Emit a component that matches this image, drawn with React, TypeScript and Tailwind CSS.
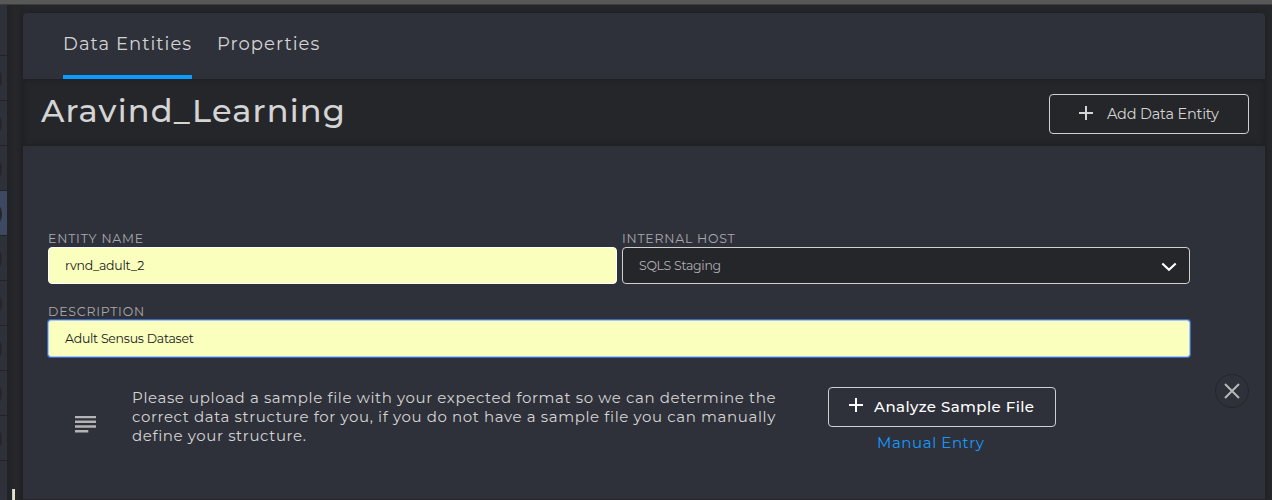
import React from "react";

const rows = ["a", "b", "c", "d", "e", "f", "g", "h", "i"];

function Sidebar() {
  return (
    <aside className="flex h-full w-[7px] shrink-0 flex-col overflow-hidden bg-[#2f313a]">
      <div className="h-[51px] shrink-0 border-b border-[#222327]" />
      {rows.map((row) => (
        <div
          key={row}
          className={
            row === "d"
              ? "flex h-[45px] shrink-0 items-center border-b border-[#222327] bg-[#3d4961] pt-0.5"
              : "flex h-[45px] shrink-0 items-center border-b border-[#222327] pt-0.5"
          }
        >
          <span className="-ml-[30px] h-8 w-8 shrink-0 rounded-full bg-[#25262a]" />
        </div>
      ))}
    </aside>
  );
}

function Plus({ className }: { className: string }) {
  return (
    <svg className={className} viewBox="0 0 14 14" fill="none" stroke="currentColor" strokeWidth="2">
      <path d="M7 0v14M0 7h14" />
    </svg>
  );
}

export default function App() {
  return (
    <div className="flex h-[500px] w-[1272px] flex-col overflow-hidden bg-[#25262a] font-[Montserrat,Inter,sans-serif] text-[#d4d4d4]">
      <div className="h-[5px] shrink-0 border-b border-[#3d3d3e] bg-[#585858]" />
      <div className="flex min-h-0 flex-1">
        <Sidebar />
        <div className="flex w-4 shrink-0 items-end bg-gradient-to-r from-[#212226] via-[#26272b] to-[#232428] pl-[5px]">
          <span className="h-[11px] w-[3px] border-l border-[#a9d0e8] bg-[#f3dfb4]" />
        </div>
        <main className="mt-2 flex w-[1242px] flex-col rounded-t-[4px] bg-[#2f313a] shadow-[0_0_5px_rgba(0,0,0,0.25)]">
          <nav className="flex h-[66px] shrink-0 gap-[25px] pl-10 text-[18px] leading-[22px]">
            <a className="w-[129px] whitespace-nowrap border-b-4 border-[#0a9cff] pt-5 tracking-[1.03px]">Data Entities</a>
            <a className="whitespace-nowrap pt-5 tracking-[1.01px]">Properties</a>
          </nav>
          <header className="flex h-[67px] shrink-0 items-start justify-between bg-[#25262a] pl-[18px] pr-4 shadow-[inset_0_0_6px_rgba(0,0,0,0.25)]">
            <h1 className="mt-3 whitespace-nowrap text-[32px] font-medium leading-[40px] tracking-[1.2px] text-[#d4d4d4]">Aravind_Learning</h1>
            <button className="mt-[15px] flex h-10 w-[200px] items-center rounded-[4px] border border-[#d0d0d0] pl-[29px]">
              <Plus className="-mt-0.5 h-[14px] w-[14px]" />
              <span className="ml-[14px] mt-px whitespace-nowrap text-[14.5px] tracking-[-0.2px]">Add Data Entity</span>
            </button>
          </header>
          <section className="flex min-h-0 flex-1 border-b border-[#25262a] pl-[25px] pt-[85px]">
            <div className="w-[1142px] shrink-0">
              <div className="grid grid-cols-[569px_568px] gap-x-[5px]">
                <label className="flex flex-col">
                  <span className="h-4 whitespace-nowrap text-[12.5px] leading-[16px] tracking-[0.8px] text-[#a8a9ac]">ENTITY NAME</span>
                  <span className="flex h-[37px] items-center rounded-[4px] border border-white bg-[#faffbd] pl-4 text-[12.5px] text-[#202020]">
                    <span className="mt-0.5 whitespace-nowrap tracking-[-0.22px]">rvnd_adult_2</span>
                  </span>
                </label>
                <label className="flex flex-col">
                  <span className="h-4 whitespace-nowrap text-[12.5px] leading-[16px] tracking-[0.75px] text-[#a8a9ac]">INTERNAL HOST</span>
                  <span className="flex h-[37px] items-center justify-between rounded-[4px] border border-[#d0d0d0] bg-[#25262a] pl-4 pr-3 text-[12.5px] text-[#b0b0b2]">
                    <span className="mt-0.5 whitespace-nowrap tracking-[-0.28px]">SQLS Staging</span>
                    <svg className="mt-0.5 h-2.5 w-4" viewBox="0 0 16 10" fill="none" stroke="#fff" strokeWidth="2.2">
                      <path d="M1.3 1.5 8 7.7l6.7-6.2" />
                    </svg>
                  </span>
                </label>
              </div>
              <label className="mt-5 flex flex-col">
                <span className="h-4 whitespace-nowrap text-[12.5px] leading-[16px] tracking-[0.8px] text-[#a8a9ac]">DESCRIPTION</span>
                <span className="flex h-[37px] items-center rounded-[3px] border border-[#a5c7fd] bg-[#faffbd] pl-4 text-[12.5px] text-[#202020] shadow-[0_0_0_1px_#416bb4]">
                  <span className="mt-0.5 whitespace-nowrap tracking-[-0.25px]">Adult Sensus Dataset</span>
                </span>
              </label>
              <div className="flex">
                <svg className="ml-[27px] mt-[59px] h-[17px] w-[21px] shrink-0" viewBox="0 0 21 17" fill="#b4b4b6">
                  <path d="M0 0h21v2.2H0zM0 4.5h21v2.4H0zM0 9.3h21v2.4H0zM0 14.1h13.3v2.4H0z" />
                </svg>
                <p className="ml-9 mt-[31px] w-[660px] shrink-0 whitespace-nowrap text-[15px] leading-[19px] tracking-[0.61px]">
                  <span className="block">Please upload a sample file with your expected format so we can determine the</span>
                  <span className="block">correct data structure for you, if you do not have a sample file you can manually</span>
                  <span className="block">define your structure.</span>
                </p>
                <div className="ml-9 mt-[30px] w-[228px] shrink-0">
                  <button className="flex h-10 w-[228px] items-center rounded-[4px] border border-[#d0d0d0] pl-5 font-medium text-white">
                    <Plus className="-mt-1 h-[14px] w-[14px]" />
                    <span className="ml-[11px] whitespace-nowrap text-[15px] tracking-[0.43px]">Analyze Sample File</span>
                  </button>
                  <a className="ml-[49px] mt-1.5 block whitespace-nowrap text-[15px] leading-[19px] tracking-[0.58px] text-[#149aff]">Manual Entry</a>
                </div>
              </div>
            </div>
            <button className="ml-[25px] mt-[143px] flex h-[34px] w-[34px] items-center justify-center rounded-full border border-[#25262a] text-[#b8b8ba]">
              <svg className="h-4 w-4" viewBox="0 0 16 16" fill="none" stroke="currentColor" strokeWidth="2">
                <path d="m1 1 14 14M15 1 1 15" />
              </svg>
            </button>
          </section>
        </main>
      </div>
    </div>
  );
}
